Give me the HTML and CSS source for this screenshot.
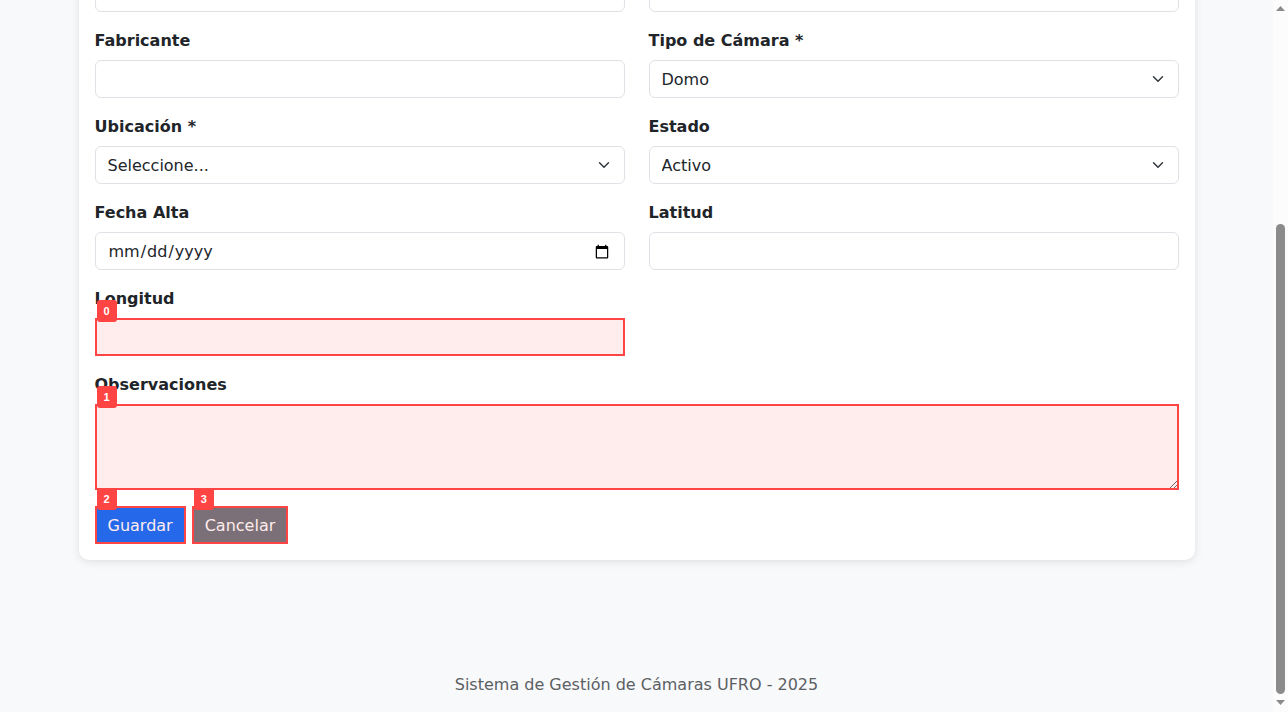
FILE: index.html
```html
<!DOCTYPE html>
<html lang="es">
<head>
<meta charset="utf-8">
<title>Sistema de Gestión de Cámaras UFRO</title>
<link rel="stylesheet" href="styles.css">
</head>
<body>
<div class="page">
  <main class="container">
    <form class="card">
      <div class="grid">
        <div class="field"><input class="control" type="text"></div>
        <div class="field"><input class="control" type="text"></div>
        <div class="field">
          <label for="fabricante">Fabricante</label>
          <input class="control" id="fabricante" type="text">
        </div>
        <div class="field">
          <label for="tipo">Tipo de Cámara *</label>
          <select class="control select" id="tipo"><option>Domo</option></select>
        </div>
        <div class="field">
          <label for="ubicacion">Ubicación *</label>
          <select class="control select" id="ubicacion"><option>Seleccione...</option></select>
        </div>
        <div class="field">
          <label for="estado">Estado</label>
          <select class="control select" id="estado"><option>Activo</option></select>
        </div>
        <div class="field">
          <label for="fecha">Fecha Alta</label>
          <input class="control" id="fecha" type="date">
        </div>
        <div class="field">
          <label for="latitud">Latitud</label>
          <input class="control" id="latitud" type="text">
        </div>
        <div class="field">
          <label for="longitud">Longitud</label>
          <div class="marked">
            <input class="control" id="longitud" type="text">
            <span class="mark"><span class="tag">0</span></span>
          </div>
        </div>
        <div class="field wide">
          <label for="observaciones">Observaciones</label>
          <div class="marked">
            <textarea class="control area" id="observaciones"></textarea>
            <span class="mark"><span class="tag">1</span></span>
          </div>
        </div>
      </div>
      <div class="actions">
        <div class="marked">
          <button class="btn primary" type="submit">Guardar</button>
          <span class="mark"><span class="tag">2</span></span>
        </div>
        <div class="marked">
          <a class="btn secondary" href="#">Cancelar</a>
          <span class="mark"><span class="tag">3</span></span>
        </div>
      </div>
    </form>
  </main>
  <footer class="footer">Sistema de Gestión de Cámaras UFRO - 2025</footer>
</div>
<div class="scrollbar" aria-hidden="true">
  <svg class="arrow" viewBox="0 0 9 5"><path d="M0 5 4.500 0 9 5z"/></svg>
  <div class="track"><div class="thumb"></div></div>
  <svg class="arrow" viewBox="0 0 9 5"><path d="M0 0h9L4.500 5z"/></svg>
</div>
</body>
</html>
```

FILE: styles.css
```css
*, *::before, *::after { box-sizing: border-box; }

body {
  margin: 0;
  height: 100vh;
  display: flex;
  overflow: hidden;
  background: #f8f9fb;
  color: #212529;
  font: 16px/26px Verdana, "DejaVu Sans", sans-serif;
}

/* The view rests at the end of the form */
.page {
  flex: 1;
  min-width: 0;
  display: flex;
  flex-direction: column;
  justify-content: flex-end;
}

.container {
  width: 100%;
  max-width: 1140px;
  margin: 0 auto;
  padding: 0 12px;
}

.card {
  padding: 16px;
  background: #fff;
  border-radius: 10px;
  box-shadow: 0 2px 8px rgba(0, 0, 0, 0.1);
}

.grid {
  display: grid;
  grid-template-columns: 1fr 1fr;
  gap: 16px 24px;
}

.wide { grid-column: 1 / -1; }

label {
  display: block;
  margin-bottom: 6px;
  font-weight: 700;
}

.control {
  display: block;
  width: 100%;
  height: 38px;
  padding: 6px 12px 4px;
  border: 1px solid #dee2e6;
  border-radius: 6px;
  background-color: #fff;
  color: inherit;
  font: inherit;
}

.select {
  appearance: none;
  padding-right: 36px;
  background-image: url("data:image/svg+xml,%3csvg xmlns='http://www.w3.org/2000/svg' viewBox='0 0 16 16'%3e%3cpath fill='none' stroke='%23343a40' stroke-linecap='round' stroke-linejoin='round' stroke-width='2' d='m2 5 6 6 6-6'/%3e%3c/svg%3e");
  background-repeat: no-repeat;
  background-position: right 12px center;
  background-size: 16px 12px;
}

.area {
  height: 86px;
  resize: vertical;
}

.marked { position: relative; }

.mark {
  position: absolute;
  inset: 0;
  border: 2px solid #ff4444;
  background: rgba(255, 68, 68, 0.1);
  pointer-events: none;
}

.tag {
  position: absolute;
  top: -20px;
  left: 0;
  width: 20px;
  border-radius: 3px;
  background: #ff4444;
  color: #fff;
  font: bold 11px/22px "Liberation Sans", sans-serif;
  text-align: center;
}

.actions {
  display: flex;
  gap: 6px;
  margin-top: 16px;
}

.btn {
  display: block;
  padding: 6px 12px 4px;
  border: 1px solid transparent;
  border-radius: 6px;
  color: #fff;
  font: inherit;
  text-decoration: none;
}

.primary { background: #0d6efd; }
.secondary { background: #6c757d; }

.footer {
  margin-top: 96px;
  padding: 16px 16px 14px;
  color: #5c6063;
  text-align: center;
}

.scrollbar {
  width: 15px;
  display: flex;
  flex-direction: column;
  align-items: center;
  gap: 6px;
  padding: 6px 0 7px;
  background: #fcfcfc;
}

.arrow {
  width: 9px;
  height: 5px;
  fill: #8b8b8b;
}

.track {
  flex: 1;
  display: flex;
  align-items: flex-end;
}

.thumb {
  width: 9px;
  height: 69.500%;
  border-radius: 5px;
  background: #8b8b8b;
}
```
